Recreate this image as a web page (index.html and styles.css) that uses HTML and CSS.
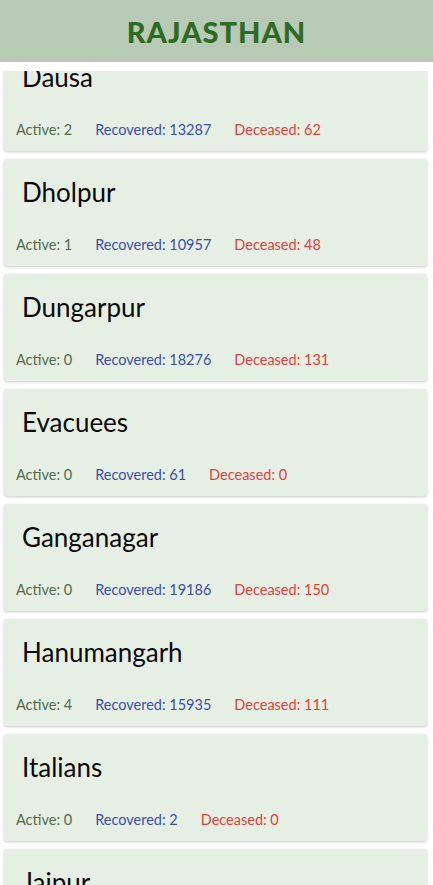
FILE: index.html
```html
<!DOCTYPE html>
<html>
<head>
<meta charset="utf-8">
<link rel="stylesheet" href="styles.css">
</head>
<body>
<div class="topbar">
  <header class="header"><h1 class="title">RAJASTHAN</h1></header>
</div>
<main class="list">
  <div class="card"><div class="name">Dausa</div><div class="stats"><span class="active">Active: 2</span><span class="recovered">Recovered: 13287</span><span class="deceased">Deceased: 62</span></div></div>
  <div class="card"><div class="name">Dholpur</div><div class="stats"><span class="active">Active: 1</span><span class="recovered">Recovered: 10957</span><span class="deceased">Deceased: 48</span></div></div>
  <div class="card"><div class="name">Dungarpur</div><div class="stats"><span class="active">Active: 0</span><span class="recovered">Recovered: 18276</span><span class="deceased">Deceased: 131</span></div></div>
  <div class="card"><div class="name">Evacuees</div><div class="stats"><span class="active">Active: 0</span><span class="recovered">Recovered: 61</span><span class="deceased">Deceased: 0</span></div></div>
  <div class="card"><div class="name">Ganganagar</div><div class="stats"><span class="active">Active: 0</span><span class="recovered">Recovered: 19186</span><span class="deceased">Deceased: 150</span></div></div>
  <div class="card"><div class="name">Hanumangarh</div><div class="stats"><span class="active">Active: 4</span><span class="recovered">Recovered: 15935</span><span class="deceased">Deceased: 111</span></div></div>
  <div class="card"><div class="name">Italians</div><div class="stats"><span class="active">Active: 0</span><span class="recovered">Recovered: 2</span><span class="deceased">Deceased: 0</span></div></div>
  <div class="card"><div class="name">Jaipur</div><div class="stats"><span class="active">Active: 12</span><span class="recovered">Recovered: 209890</span><span class="deceased">Deceased: 1959</span></div></div>
  <div class="card"><div class="name">Jaisalmer</div><div class="stats"><span class="active">Active: 0</span><span class="recovered">Recovered: 7025</span><span class="deceased">Deceased: 51</span></div></div>
</main>
</body>
</html>
```
FILE: styles.css
```css
html, body {
  margin: 0;
  padding: 0;
  background: #ffffff;
}
body {
  font-family: "Lato", "Liberation Sans", sans-serif;
}
.topbar {
  position: fixed;
  top: 0;
  left: 0;
  right: 0;
  background: #ffffff;
  padding-bottom: 9px;
  z-index: 10;
}
.header {
  height: 62px;
  background: #b8c9b5;
  display: flex;
  align-items: center;
  justify-content: center;
}
.title {
  margin: 0;
  font-family: "Lato", sans-serif;
  font-weight: 900;
  font-size: 29px;
  letter-spacing: 1px;
  color: #2d6a22;
}
.list {
  padding: 44px 6px 20px 4px;
  display: flex;
  flex-direction: column;
  gap: 8px;
}
.card {
  height: 107px;
  box-sizing: border-box;
  background: #e6efe4;
  border-radius: 3px;
  box-shadow: 0 1px 3px rgba(0, 0, 0, 0.22);
  padding: 18px 12px 13px 12px;
  display: flex;
  flex-direction: column;
  justify-content: space-between;
}
.name {
  margin-left: 6px;
  font-size: 26px;
  line-height: 30px;
  color: #0a0a0a;
}
.stats {
  display: flex;
  gap: 23px;
  font-size: 14.5px;
  line-height: 17px;
}
.active { color: #4f6b4c; }
.recovered { color: #3a4ea8; }
.deceased { color: #e2403a; }
```
